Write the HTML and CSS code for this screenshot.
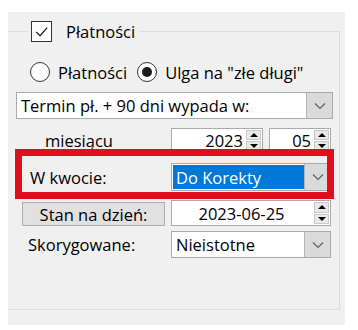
FILE: index.html
```html
<!DOCTYPE html>
<html lang="pl">
<head>
    <meta charset="UTF-8">
    <meta name="viewport" content="width=device-width, initial-scale=1.0">
    <title>Płatności</title>
    <link rel="stylesheet" href="styles.css">
</head>
<body>
    <div class="panel">
        <fieldset class="group">
            <legend class="group-title">
                <span class="checkbox">
                    <svg viewBox="0 0 20 20" width="20" height="20"><path d="M4.5 10.5 L8.5 14.5 L16 6" /></svg>
                </span>
                <span class="title-text">Płatności</span>
            </legend>

            <div class="radios">
                <label class="radio"><span class="circle"></span>Płatności</label>
                <label class="radio"><span class="circle on"></span>Ulga na "złe długi"</label>
            </div>

            <div class="combo combo-wide">
                <span class="combo-text">Termin pł. + 90 dni wypada w:</span>
                <span class="combo-btn"><svg viewBox="0 0 12 8" width="12" height="8"><path d="M1 1.5 L6 6.5 L11 1.5" /></svg></span>
            </div>

            <div class="row row-month">
                <span class="label label-month">miesiącu</span>
                <div class="spin spin-year">
                    <span class="spin-text">2023</span>
                    <span class="spin-btns"><span class="up"></span><span class="down"></span></span>
                </div>
                <div class="spin spin-month">
                    <span class="spin-text">05</span>
                    <span class="spin-btns"><span class="up"></span><span class="down"></span></span>
                </div>
            </div>

            <div class="row row-amount">
                <span class="label label-amount">W kwocie:</span>
                <div class="combo combo-field">
                    <span class="combo-text selected">Do Korekty</span>
                    <span class="combo-btn"><svg viewBox="0 0 12 8" width="12" height="8"><path d="M1 1.5 L6 6.5 L11 1.5" /></svg></span>
                </div>
                <div class="marker"></div>
            </div>

            <div class="row row-date">
                <button class="btn" type="button">Stan na dzień:</button>
                <div class="spin spin-date">
                    <span class="spin-text center">2023-06-25</span>
                    <span class="spin-btns"><span class="up"></span><span class="down"></span></span>
                </div>
            </div>

            <div class="row row-fixed">
                <span class="label label-fixed">Skorygowane:</span>
                <div class="combo combo-field">
                    <span class="combo-text">Nieistotne</span>
                    <span class="combo-btn"><svg viewBox="0 0 12 8" width="12" height="8"><path d="M1 1.5 L6 6.5 L11 1.5" /></svg></span>
                </div>
            </div>
        </fieldset>
    </div>
</body>
</html>
```

FILE: styles.css
```css
/* Okno ustawień płatności */
body {
    margin: 0;
    background: #fff;
    font-family: "Open Sans", "Noto Sans", sans-serif;
    font-size: 16.5px;
    color: #000;
}

.panel {
    margin: 12px 0 0 8px;
    width: 337px;
    height: 313px;
    padding-top: 9px;
    box-sizing: border-box;
    background: #f0f0f0;
}

.group {
    margin: 0;
    padding: 0 6px 0 8px;
    width: 332px;
    height: 289px;
    box-sizing: border-box;
    border: 1px solid #dcdcdc;
    border-left: none;
}

.group-title {
    display: flex;
    align-items: center;
    height: 20px;
    margin-left: 12px;
    padding: 0 4px 0 3px;
}

.checkbox {
    width: 19px;
    height: 19px;
    border: 1px solid #333;
    background: #fff;
}

.checkbox svg {
    display: block;
    width: 19px;
    height: 19px;
    fill: none;
    stroke: #222;
    stroke-width: 1.3;
}

.title-text {
    margin-left: 14px;
}

.radios {
    display: flex;
    align-items: center;
    height: 20px;
    margin: 21px 0 0 14px;
}

.radio {
    display: flex;
    align-items: center;
    margin-right: 10px;
}

.circle {
    width: 18px;
    height: 18px;
    margin-right: 8px;
    border: 1px solid #333;
    border-radius: 50%;
    background: #fff;
    position: relative;
}

.circle.on::after {
    content: "";
    position: absolute;
    left: 4px;
    top: 4px;
    width: 10px;
    height: 10px;
    border-radius: 50%;
    background: #1a1a1a;
}

.combo {
    display: flex;
    height: 27px;
    box-sizing: border-box;
    border: 1px solid #a9a9a9;
    background: #fff;
}

.combo-wide {
    margin-top: 10px;
    width: 317px;
}

.combo-text {
    flex: 1;
    display: flex;
    align-items: center;
    padding-left: 4px;
    white-space: nowrap;
    overflow: hidden;
}

.combo-text.selected {
    margin: 1px 0 1px 1px;
    padding-left: 3px;
    background: #0078d7;
    color: #fff;
}

.combo-btn {
    width: 25px;
    display: flex;
    align-items: center;
    justify-content: center;
    background: #dadada;
    border-left: 1px solid #b4b4b4;
}

.combo-btn svg {
    fill: none;
    stroke: #606060;
    stroke-width: 1.2;
}

.row {
    display: flex;
    align-items: center;
}

.row-month {
    margin-top: 9px;
    height: 25px;
}

.row-amount {
    margin-top: 10px;
    height: 28px;
    position: relative;
}

.row-date {
    margin-top: 9px;
    height: 26px;
}

.row-fixed {
    margin-top: 5px;
    height: 27px;
}

.label {
    width: 155px;
    flex: none;
    box-sizing: border-box;
}

.label-month {
    padding-left: 29px;
}

.label-amount {
    padding-left: 14px;
}

.label-fixed {
    padding-left: 12px;
}

.row-amount .combo-field {
    height: 28px;
}

.combo-field {
    width: 160px;
}

.spin {
    display: flex;
    height: 25px;
    box-sizing: border-box;
    border: 1px solid #a9a9a9;
    background: #fff;
}

.spin-year {
    width: 92px;
}

.spin-month {
    width: 62px;
    margin-left: 6px;
}

.spin-date {
    width: 160px;
    height: 26px;
}

.spin-text {
    flex: 1;
    display: flex;
    align-items: center;
    justify-content: flex-end;
    padding-right: 3px;
}

.spin-text.center {
    justify-content: center;
}

.spin-btns {
    width: 15px;
    display: flex;
    flex-direction: column;
    padding: 1px 1px 1px 0;
    gap: 1px;
}

.spin-btns span {
    flex: 1;
    background: #e8e8e8;
    border: 1px solid #c8c8c8;
    display: flex;
    align-items: center;
    justify-content: center;
}

.spin-btns .up::before {
    content: "";
    border-left: 4px solid transparent;
    border-right: 4px solid transparent;
    border-bottom: 4px solid #000;
}

.spin-btns .down::before {
    content: "";
    border-left: 4px solid transparent;
    border-right: 4px solid transparent;
    border-top: 4px solid #000;
}

.btn {
    width: 143px;
    height: 24px;
    margin: 2px 6px 0 6px;
    padding: 0;
    font: inherit;
    color: #000;
    background: #e1e1e1;
    border: 1px solid #adadad;
}

/* czerwona ramka wyróżnienia */
.marker {
    position: absolute;
    left: -1px;
    right: -1px;
    top: -14px;
    bottom: -8px;
    border: 7px solid #e30b1c;
    pointer-events: none;
}
```
